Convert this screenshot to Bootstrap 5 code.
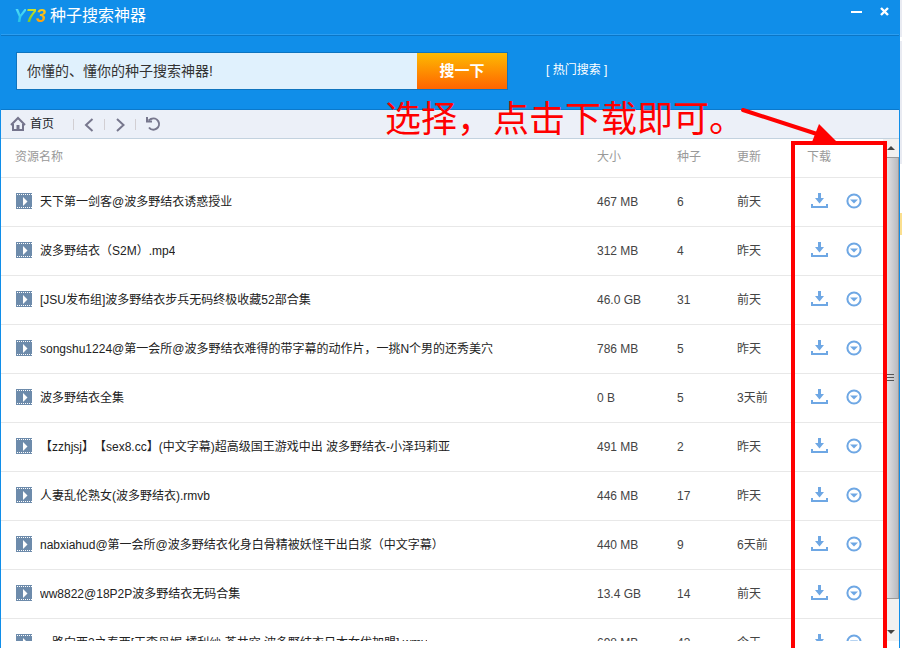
<!DOCTYPE html>
<html lang="zh-CN">
<head>
<meta charset="utf-8">
<meta name="viewport" content="width=device-width, initial-scale=1">
<title>种子搜索神器</title>
<link href="https://cdn.jsdelivr.net/npm/bootstrap@5.3.0/dist/css/bootstrap.min.css" rel="stylesheet">
<style>
body{font-family:"Liberation Sans","Noto Sans CJK SC",sans-serif;font-size:12px;line-height:18px;color:#222;background:#fff;text-spacing-trim:space-all;font-feature-settings:"chws" 0}
.desk{background:linear-gradient(#e9ebf2 0 37px,#fff 37px 41px,#e9ebf2 41px 164px,#fff 164px 213px,#fbdf8e 213px 235px,#fff 235px);padding-right:2px}
.app-window{border-left:1px solid #108ee9;border-right:1px solid #108ee9;background:#fff}
.title-bar{height:34px;background:#108ee9;color:#fff}
.brand-mark{font-size:18px;line-height:24px;font-weight:700;font-style:italic;width:34px}
.brand-mark span{-webkit-background-clip:text;background-clip:text;color:transparent}
.mark-y{background-image:linear-gradient(#5fe6ff,#12b5dc)}
.mark-7{background-image:linear-gradient(#f2ee26,#54b82c)}
.mark-3{background-image:linear-gradient(#ffe21c,#f98a0b)}
.app-name{font-size:16px;line-height:24px;margin-left:3px}
.win-btn{width:29px;height:24px;line-height:0}
.search-band{height:75px;background:#108ee9;border-top:1px solid #2c9df0;box-shadow:inset 0 1px #0b76c6;padding-left:15px}
.search-box{width:492px;height:38px;border:1px solid #0e74bf;margin-top:17px}
.search-box .form-control{background:#e0f1fd;font-size:14px;color:#333;padding:0 10px}
.search-go{width:90px;font-size:15px;font-weight:700;background:linear-gradient(#fdba02,#ff6400)}
.search-go:hover{background:linear-gradient(#ffc526,#ff7a22)}
.hot-link{margin-left:38px}
.tool-bar{height:30px;background:#ecf0f8;border-top:1px solid #0b79cb;border-bottom:1px solid #c3d2df}
.home-btn{font-size:12px;gap:3px}
.tool-sep{width:1px;height:11px;background:#d2cfd3}
.home-btn+.tool-sep{margin-left:19px}
.result-pane{margin-bottom:7px}
.results{table-layout:fixed;--bs-table-bg:transparent;color:#444}
.results th,.results td{padding:0;border-bottom:1px solid #e8e8e8;vertical-align:middle;white-space:nowrap}
.results th{height:39px;font-weight:400;color:#999}
.results thead th{padding-bottom:2px;line-height:16px;height:38px}
.results td{height:49px}
.results .c-name{padding-left:15px}
.results th.c-name{padding-left:14px}
.c-size{width:80px}.c-seed{width:60px}.c-date{width:70px}.c-act{width:76px}
.res-title{color:#222}
.film-icon,.row-icons{margin-bottom:2px}
.row-icons{padding-left:4px;gap:18px}
.scroll-rail{width:16px;background:#f0f0f0}
.rail-arrow{height:18px}
.rail-thumb{border:1px solid #999;border-left-color:#eee;background:linear-gradient(90deg,#f2f2f2,#d9dadd 35%,#b9bbc0);margin-bottom:24px}
.note-text{top:99px;right:154px;font-family:"Liberation Serif","Noto Sans CJK SC",serif;font-size:36px;line-height:42px;font-weight:400;color:red}
.note-arrow{top:104px;right:61px}
.note-box{top:141px;right:12px;bottom:-8px;width:96px;border:4px solid red}
.note-text,.note-arrow,.note-box{pointer-events:none}
</style>
</head>
<body>
<svg class="d-none" aria-hidden="true">
  <symbol id="film" viewBox="0 0 16 16"><path fill="#6d8bab" d="M0 0h16v16H0z"/><path stroke="#fff" stroke-dasharray="1 1" d="M1 1.500h15M1 14.500h15"/><path fill="#fff" d="M7 4l4.500 4.500L7 13z"/></symbol>
  <symbol id="down" viewBox="0 0 17 16"><path fill="#6ea7e4" d="M7 0h3v5h3L8.500 10.500 4 5h3zM0 11h2v2h13v-2h2v4H0z"/></symbol>
  <symbol id="more" viewBox="0 0 16 16"><circle cx="8" cy="8" r="6.600" fill="none" stroke="#6ea7e4" stroke-width="2"/><path fill="#6ea7e4" d="M4 6.500h8L8 10.500z"/></symbol>
</svg>
<div class="desk vh-100 overflow-hidden">
<div class="app-window d-flex flex-column h-100 position-relative overflow-hidden">
  <header class="title-bar d-flex align-items-start flex-shrink-0 ps-2">
    <div class="brand-mark d-flex justify-content-center mt-1 ms-1" aria-label="Y73"><span class="mark-y">Y</span><span class="mark-7">7</span><span class="mark-3">3</span></div>
    <div class="app-name mt-1">种子搜索神器</div>
    <button class="win-btn btn p-0 border-0 rounded-0 ms-auto" aria-label="最小化"><svg width="12" height="12"><path fill="#fff" d="M1 5h11v2H1z"/></svg></button>
    <button class="win-btn btn p-0 border-0 rounded-0 me-0" aria-label="关闭"><svg width="11" height="12"><path fill="none" stroke="#fff" stroke-width="2.400" d="M2 2l7 7M9 2l-7 7"/></svg></button>
  </header>
  <form class="search-band d-flex flex-shrink-0" onsubmit="return false">
    <div class="search-box d-flex">
      <input class="form-control border-0 rounded-0" type="text" aria-label="搜索关键词" value="你懂的、懂你的种子搜索神器!">
      <button class="search-go btn p-0 border-0 rounded-0 text-white flex-shrink-0">搜一下</button>
    </div>
    <a class="hot-link text-white text-decoration-none align-self-center pb-1" href="#">[ 热门搜索 ]</a>
  </form>
  <nav class="tool-bar d-flex align-items-center flex-shrink-0" aria-label="导航">
    <button class="home-btn btn p-0 border-0 rounded-0 d-flex align-items-center ms-2"><svg width="18" height="16" viewBox="0 0 18 16"><path fill="none" stroke="#74748c" stroke-width="2" d="M2 9l7-7 7 7M4 8v6h10V8"/><path fill="#74748c" d="M7.500 9h3v5h-3z"/></svg>首页</button>
    <span class="tool-sep"></span>
    <button class="btn p-0 border-0 lh-1 mx-2" aria-label="后退"><svg width="14" height="14" viewBox="0 0 14 14"><path fill="none" stroke="#77778d" stroke-width="2" d="M10.500 1L4 7l6.500 6"/></svg></button>
    <span class="tool-sep"></span>
    <button class="btn p-0 border-0 lh-1 mx-2" aria-label="前进"><svg width="14" height="14" viewBox="0 0 14 14"><path fill="none" stroke="#77778d" stroke-width="2" d="M4 1l6.500 6L4 13"/></svg></button>
    <span class="tool-sep"></span>
    <button class="btn p-0 border-0 lh-1 ms-2" aria-label="刷新"><svg width="18" height="16" viewBox="0 0 18 16"><path fill="none" stroke="#77778d" stroke-width="2" d="M4.500 4.500L7 3a5.600 5.600 0 1 1-2 8.500"/><path fill="#77778d" d="M2 1h2v3.500h4v2H2z"/></svg></button>
  </nav>
  <main class="result-pane d-flex flex-fill overflow-hidden">
    <div class="flex-fill overflow-hidden">
      <table class="results table mb-0 w-100">
        <thead><tr><th class="c-name">资源名称</th><th class="c-size">大小</th><th class="c-seed">种子</th><th class="c-date">更新</th><th class="c-act">下载</th></tr></thead>
        <tbody id="rows"></tbody>
      </table>
    </div>
    <div class="scroll-rail d-flex flex-column flex-shrink-0" aria-hidden="true">
      <div class="rail-arrow d-flex align-items-center justify-content-center flex-shrink-0"><svg width="8" height="5"><path fill="#444" d="M0 4l4-4 4 4z"/></svg></div>
      <div class="rail-thumb flex-fill d-flex align-items-center"><svg width="12" height="10"><path stroke="#555" d="M2 1.500h8M2 4.500h8M2 7.500h8"/></svg></div>
      <div class="rail-arrow d-flex align-items-center justify-content-center flex-shrink-0"><svg width="8" height="5"><path fill="#444" d="M0 0h8L4 4z"/></svg></div>
    </div>
  </main>
  <div class="note-text position-absolute text-nowrap">选择，点击下载即可。</div>
  <div class="note-box position-absolute"></div>
  <svg class="note-arrow position-absolute" width="98" height="38" aria-hidden="true"><path stroke="red" stroke-width="4" stroke-linecap="round" d="M3 6l74 24"/><path fill="red" d="M79 20l18 18H72z"/></svg>
</div>
</div>
<script src="https://cdn.jsdelivr.net/npm/bootstrap@5.3.0/dist/js/bootstrap.bundle.min.js"></script>
<script>
const items = [
  ["天下第一剑客@波多野结衣诱惑授业","467 MB","6","前天"],
  ["波多野结衣（S2M）.mp4","312 MB","4","昨天"],
  ["[JSU发布组]波多野结衣步兵无码终极收藏52部合集","46.0 GB","31","前天"],
  ["songshu1224@第一会所@波多野结衣难得的带字幕的动作片，一挑N个男的还秀美穴","786 MB","5","昨天"],
  ["波多野结衣全集","0 B","5","3天前"],
  ["【zzhjsj】【sex8.cc】(中文字幕)超高级国王游戏中出 波多野结衣-小泽玛莉亚","491 MB","2","昨天"],
  ["人妻乱伦熟女(波多野结衣).rmvb","446 MB","17","昨天"],
  ["nabxiahud@第一会所@波多野结衣化身白骨精被妖怪干出白浆（中文字幕）","440 MB","9","6天前"],
  ["ww8822@18P2P波多野结衣无码合集","13.4 GB","14","前天"],
  ["一路向西2之泰西[王李丹妮.橘利纱.苍井空.波多野结衣日本女优加盟].wmv","698 MB","43","今天"]
];
document.getElementById("rows").innerHTML = items.map(([name, size, seeds, date]) => `
<tr>
  <td class="c-name"><div class="d-flex align-items-center gap-2"><svg class="film-icon flex-shrink-0" width="16" height="16"><use href="#film"/></svg><span class="res-title text-truncate">${name}</span></div></td>
  <td>${size}</td><td>${seeds}</td><td>${date}</td>
  <td><div class="row-icons d-flex align-items-center"><button class="btn p-0 border-0 lh-1" aria-label="下载"><svg width="17" height="16"><use href="#down"/></svg></button><button class="btn p-0 border-0 lh-1" aria-label="更多"><svg width="16" height="16"><use href="#more"/></svg></button></div></td>
</tr>`).join("");
</script>
</body>
</html>
